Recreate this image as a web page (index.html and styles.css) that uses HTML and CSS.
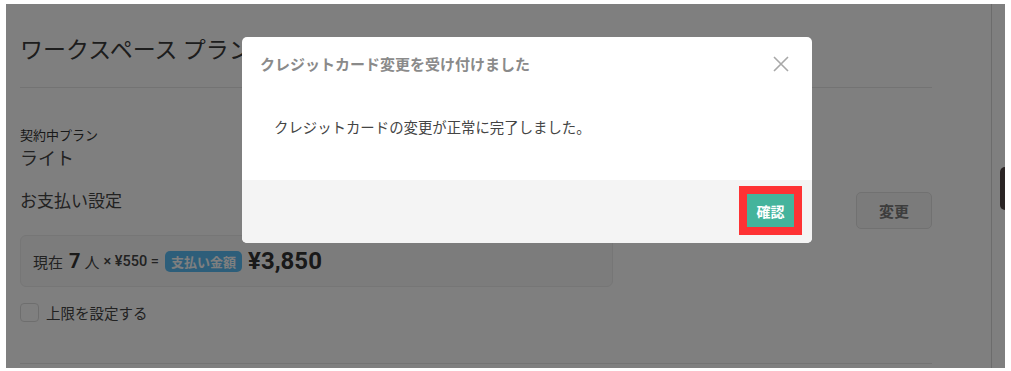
FILE: index.html
```html
<!DOCTYPE html>
<html lang="ja">
<head>
<meta charset="utf-8">
<title>ワークスペース プラン</title>
<link rel="stylesheet" href="styles.css">
</head>
<body>
<div class="screen">
  <main class="main">
    <header class="page-head">
      <h1 class="page-title">ワークスペース プラン</h1>
    </header>
    <div class="plan-label">契約中プラン</div>
    <div class="plan-name">ライト</div>
    <div class="pay-row">
      <h2 class="pay-title">お支払い設定</h2>
      <button class="btn-change">変更</button>
    </div>
    <div class="pay-box">
      <span class="t-now">現在</span>
      <span class="t-num">7</span>
      <span class="t-now">人</span>
      <span class="t-calc">× ¥550 =</span>
      <span class="badge">支払い金額</span>
      <span class="t-amount">¥3,850</span>
    </div>
    <label class="limit-row">
      <span class="checkbox"></span>
      <span class="limit-label">上限を設定する</span>
    </label>
    <div class="bottom-line"></div>
  </main>
  <aside class="scroll-strip">
    <div class="thumb"></div>
  </aside>
  <div class="overlay"></div>
  <div class="modal">
    <div class="modal-head">
      <div class="modal-title">クレジットカード変更を受け付けました</div>
      <svg class="close" width="16" height="16" viewBox="0 0 16 16"><path d="M1 1L15 15M15 1L1 15" stroke="#a8a8a8" stroke-width="1.6" fill="none"/></svg>
    </div>
    <div class="modal-body">クレジットカードの変更が正常に完了しました。</div>
    <div class="modal-foot">
      <button class="btn-ok">確認</button>
    </div>
  </div>
</div>
</body>
</html>
```

FILE: styles.css
```css
* { box-sizing: border-box; }
html, body { margin: 0; }
body {
  background: #fff;
  padding: 4px 6px 3px 6px;
  font-family: "Noto Sans CJK JP", "Noto Sans", sans-serif;
  color: #333;
}
.screen {
  position: relative;
  height: 364px;
  display: flex;
  overflow: hidden;
  background: #fff;
}
.main {
  flex: 1;
  padding: 0 59px 0 14px;
}
.page-head {
  padding-top: 28px;
  padding-bottom: 22px;
  border-bottom: 1px solid #e6e6e6;
}
.page-title {
  margin: 0;
  font-size: 23px;
  line-height: 33px;
  font-weight: 400;
  color: #3a3a3a;
  white-space: nowrap;
}
.plan-label {
  margin-top: 38px;
  font-size: 13px;
  line-height: 18px;
  color: #333;
}
.plan-name {
  margin-top: 1px;
  font-size: 18px;
  line-height: 24px;
  color: #444;
}
.pay-row {
  display: flex;
  justify-content: space-between;
  align-items: flex-start;
  margin-top: 18px;
}
.pay-title {
  margin: 0;
  font-size: 17px;
  line-height: 26px;
  font-weight: 400;
  color: #444;
}
.btn-change {
  margin-top: 5px;
  width: 76px;
  height: 37px;
  border: 1px solid #e2e2e2;
  border-radius: 5px;
  background: #f7f7f7;
  font-family: inherit;
  font-size: 15px;
  font-weight: 700;
  color: #7a7a7a;
}
.pay-box {
  margin-top: 6px;
  width: 593px;
  height: 52px;
  border: 1px solid #ececec;
  border-radius: 6px;
  background: #f9f9f9;
  display: flex;
  align-items: center;
  padding-left: 12px;
  white-space: nowrap;
}
.t-now { font-size: 15px; color: #444; }
.t-num {
  font-family: "Roboto", "Liberation Sans", sans-serif;
  font-weight: 700;
  font-size: 20px;
  margin: 0 4px 0 6px;
  color: #333;
}
.t-calc {
  font-family: "Roboto", "Liberation Sans", sans-serif;
  font-size: 14.5px;
  font-weight: 500;
  margin-left: 4px;
  color: #444;
}
.badge {
  margin-left: 6px;
  background: #5bbdf5;
  color: #fff;
  font-size: 13px;
  font-weight: 700;
  line-height: 21px;
  padding: 0 6px;
  border-radius: 5px;
}
.t-amount {
  margin-left: 6px;
  font-family: "Roboto", "Liberation Sans", sans-serif;
  font-weight: 700;
  font-size: 24px;
  color: #333;
}
.limit-row {
  margin-top: 15px;
  display: flex;
  align-items: center;
  height: 20px;
}
.checkbox {
  width: 19px;
  height: 19px;
  border: 1px solid #ddd;
  border-radius: 4px;
  background: #fff;
}
.limit-label {
  margin-left: 7px;
  font-size: 14.5px;
  color: #444;
}
.bottom-line {
  margin-top: 41px;
  border-top: 1px solid #e6e6e6;
}
.scroll-strip {
  width: 14px;
  border-left: 1px solid #d8d8d8;
  padding-top: 163px;
  padding-left: 8px;
}
.thumb {
  width: 10px;
  height: 43px;
  border-radius: 5px;
  background: #544848;
}
.overlay {
  position: absolute;
  inset: 0;
  background: rgba(0, 0, 0, 0.5);
}
.modal {
  position: absolute;
  left: 236px;
  top: 33px;
  width: 570px;
  height: 206px;
  background: #fff;
  border-radius: 5px;
  display: flex;
  flex-direction: column;
}
.modal-head {
  height: 54px;
  padding: 17px 23px 0 18px;
  display: flex;
  justify-content: space-between;
  align-items: flex-start;
}
.modal-title {
  font-size: 15px;
  line-height: 20px;
  font-weight: 700;
  color: #8a8a8a;
}
.close { margin-top: 2px; }
.modal-body {
  flex: 1;
  padding: 26px 32px 0 32px;
  font-size: 14.4px;
  line-height: 20px;
  color: #444;
}
.modal-foot {
  height: 63px;
  background: #f4f4f4;
  border-radius: 0 0 5px 5px;
  display: flex;
  justify-content: flex-end;
  align-items: center;
  padding-right: 18px;
}
.btn-ok {
  width: 47px;
  height: 33px;
  border: none;
  background: #44b49c;
  color: #fff;
  font-family: inherit;
  font-size: 14px;
  font-weight: 700;
  outline: 8px solid #fe3234;
  margin-top: -2px;
}
```
